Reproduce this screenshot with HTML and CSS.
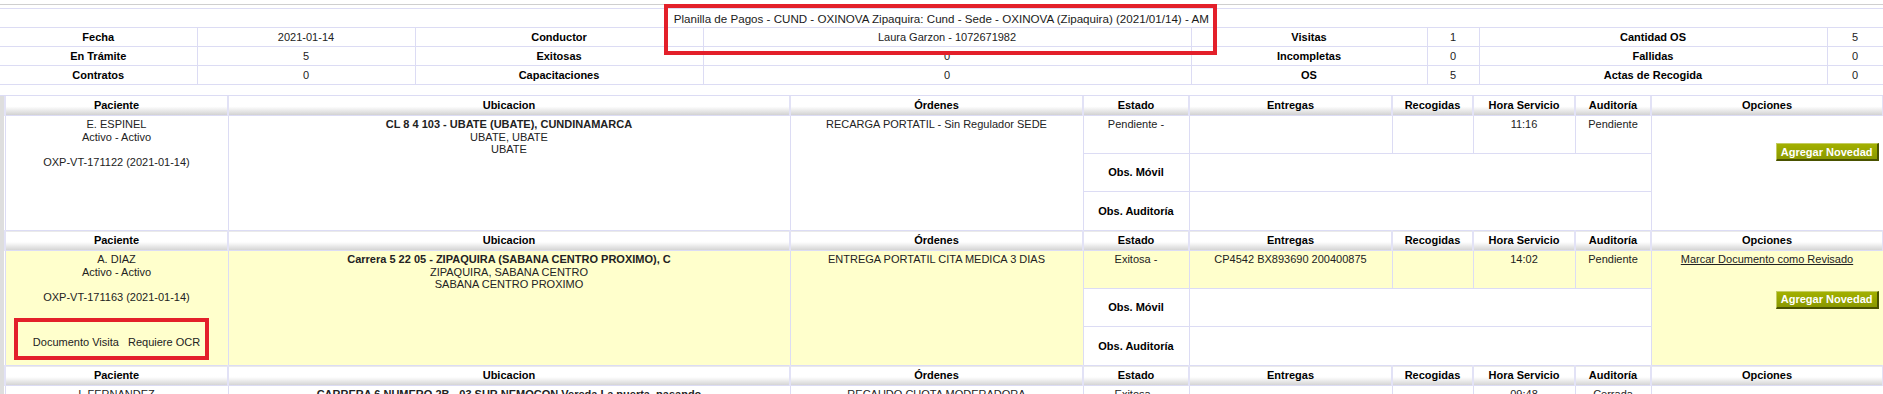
FILE: index.html
```html
<!DOCTYPE html>
<html>
<head>
    <title>Planilla de Pagos</title>
    <link rel="stylesheet" href="styles.css">
</head>
<body>
    <div class="topbar"></div>

    <table class="resumen">
        <colgroup>
            <col style="width: 197px">
            <col style="width: 218px">
            <col style="width: 288px">
            <col style="width: 488px">
            <col style="width: 236px">
            <col style="width: 52px">
            <col style="width: 348px">
            <col style="width: 56px">
        </colgroup>
        <tr>
            <td colspan="8" class="titulo">Planilla de Pagos - CUND - OXINOVA Zipaquira: Cund - Sede - OXINOVA (Zipaquira) (2021/01/14) - AM</td>
        </tr>
        <tr>
            <th>Fecha</th>
            <td>2021-01-14</td>
            <th>Conductor</th>
            <td>Laura Garzon - 1072671982</td>
            <th>Visitas</th>
            <td>1</td>
            <th>Cantidad OS</th>
            <td>5</td>
        </tr>
        <tr>
            <th>En Trámite</th>
            <td>5</td>
            <th>Exitosas</th>
            <td>0</td>
            <th>Incompletas</th>
            <td>0</td>
            <th>Fallidas</th>
            <td>0</td>
        </tr>
        <tr>
            <th>Contratos</th>
            <td>0</td>
            <th>Capacitaciones</th>
            <td>0</td>
            <th>OS</th>
            <td>5</td>
            <th>Actas de Recogida</th>
            <td>0</td>
        </tr>
    </table>

    <div class="main">
        <table class="planilla">
            <colgroup>
                <col style="width: 223px">
                <col style="width: 562px">
                <col style="width: 293px">
                <col style="width: 106px">
                <col style="width: 203px">
                <col style="width: 81px">
                <col style="width: 102px">
                <col style="width: 76px">
                <col style="width: 232px">
            </colgroup>

            <tbody class="visita">
                <tr class="cabecera">
                    <th>Paciente</th>
                    <th>Ubicacion</th>
                    <th>Órdenes</th>
                    <th>Estado</th>
                    <th>Entregas</th>
                    <th>Recogidas</th>
                    <th>Hora Servicio</th>
                    <th>Auditoría</th>
                    <th>Opciones</th>
                </tr>
                <tr class="sub">
                    <td rowspan="3">
                        E. ESPINEL<br>
                        Activo - Activo<br>
                        <br>
                        OXP-VT-171122 (2021-01-14)
                    </td>
                    <td rowspan="3">
                        <b>CL 8 4 103 - UBATE (UBATE), CUNDINAMARCA</b><br>
                        UBATE, UBATE<br>
                        UBATE
                    </td>
                    <td rowspan="3">RECARGA PORTATIL - Sin Regulador SEDE</td>
                    <td>Pendiente -</td>
                    <td></td>
                    <td></td>
                    <td>11:16</td>
                    <td>Pendiente</td>
                    <td rowspan="3" class="opciones">
                        <div class="acciones">
                            <input type="button" class="btn-novedad" value="Agregar Novedad">
                        </div>
                    </td>
                </tr>
                <tr class="sub obs">
                    <th>Obs. Móvil</th>
                    <td colspan="4"></td>
                </tr>
                <tr class="sub obs">
                    <th>Obs. Auditoría</th>
                    <td colspan="4"></td>
                </tr>
            </tbody>

            <tbody class="visita exitosa">
                <tr class="cabecera">
                    <th>Paciente</th>
                    <th>Ubicacion</th>
                    <th>Órdenes</th>
                    <th>Estado</th>
                    <th>Entregas</th>
                    <th>Recogidas</th>
                    <th>Hora Servicio</th>
                    <th>Auditoría</th>
                    <th>Opciones</th>
                </tr>
                <tr class="sub">
                    <td rowspan="3">
                        A. DIAZ<br>
                        Activo - Activo<br>
                        <br>
                        OXP-VT-171163 (2021-01-14)
                        <div class="documentos">
                            <a href="#">Documento Visita</a>&nbsp;&nbsp;&nbsp;<a href="#">Requiere OCR</a>
                        </div>
                    </td>
                    <td rowspan="3">
                        <b>Carrera 5 22 05 - ZIPAQUIRA (SABANA CENTRO PROXIMO), C</b><br>
                        ZIPAQUIRA, SABANA CENTRO<br>
                        SABANA CENTRO PROXIMO
                    </td>
                    <td rowspan="3">ENTREGA PORTATIL CITA MEDICA 3 DIAS</td>
                    <td>Exitosa -</td>
                    <td>CP4542 BX893690 200400875</td>
                    <td></td>
                    <td>14:02</td>
                    <td>Pendiente</td>
                    <td rowspan="3" class="opciones">
                        <a href="#" class="revisado">Marcar Documento como Revisado</a>
                        <div class="acciones">
                            <input type="button" class="btn-novedad" value="Agregar Novedad">
                        </div>
                    </td>
                </tr>
                <tr class="sub obs">
                    <th>Obs. Móvil</th>
                    <td colspan="4"></td>
                </tr>
                <tr class="sub obs">
                    <th>Obs. Auditoría</th>
                    <td colspan="4"></td>
                </tr>
            </tbody>

            <tbody class="visita">
                <tr class="cabecera">
                    <th>Paciente</th>
                    <th>Ubicacion</th>
                    <th>Órdenes</th>
                    <th>Estado</th>
                    <th>Entregas</th>
                    <th>Recogidas</th>
                    <th>Hora Servicio</th>
                    <th>Auditoría</th>
                    <th>Opciones</th>
                </tr>
                <tr class="sub">
                    <td rowspan="3">
                        I. FERNANDEZ<br>
                        Activo - Activo<br>
                        <br>
                        OXP-VT-171140 (2021-01-14)
                    </td>
                    <td rowspan="3">
                        <b>CARRERA 6 NUMERO 2B - 03 SUR NEMOCON Vereda La puerta, pasando</b><br>
                        NEMOCON, SABANA CENTRO
                    </td>
                    <td rowspan="3">RECAUDO CUOTA MODERADORA</td>
                    <td>Exitosa -</td>
                    <td></td>
                    <td></td>
                    <td>09:48</td>
                    <td>Cerrada</td>
                    <td rowspan="3" class="opciones"></td>
                </tr>
                <tr class="sub obs">
                    <th>Obs. Móvil</th>
                    <td colspan="4"></td>
                </tr>
                <tr class="sub obs">
                    <th>Obs. Auditoría</th>
                    <td colspan="4"></td>
                </tr>
            </tbody>
        </table>
    </div>

    <!-- marcas de revision -->
    <div class="marca marca-titulo"></div>
    <div class="marca marca-documentos"></div>
</body>
</html>
```

FILE: styles.css
```css
body {
    font-family: "Liberation Sans", Arial, sans-serif;
    font-size: 11px;
    color: #222;
    margin: 0;
    padding: 0;
    background-color: White;
    overflow: hidden;
}

.topbar {
    height: 4px;
    border-bottom: 1px solid #cfcfcf;
    margin-bottom: 3px;
}

table {
    border-collapse: collapse;
    table-layout: fixed;
}

.resumen {
    width: 1883px;
}

.resumen td, .resumen th {
    height: 18px;
    padding: 0;
    text-align: center;
    border: 1px solid #dcdcf4;
    border-left: none;
}

.resumen td {
    font-weight: normal;
}

.resumen th {
    color: #000;
}

.resumen .titulo {
    font-size: 11.6px;
    color: #1a1a1a;
}

.main {
    margin-top: 10px;
    border-top: 1px solid #dcdcf4;
    background-color: #dedede;
    padding-left: 4px;
}

.planilla {
    width: 1879px;
    background-color: White;
    border-left: 1px solid #dcdcf4;
}

.planilla td, .planilla th {
    border: 1px solid #dcdcf4;
    padding: 2px 3px;
    text-align: center;
    vertical-align: top;
    line-height: 12.6px;
}

.cabecera th {
    height: 15px;
    color: #000;
    vertical-align: middle;
    border-top: none;
    border-left: 2px solid #e2e2f6;
    border-right: 2px solid #e2e2f6;
    background: linear-gradient(to bottom, #fff 0%, #fff 55%, #e6e6e6 80%, #d2d2d2 100%);
}

.sub {
    height: 38px;
}

.obs:last-child {
    height: 39px;
}

.obs th {
    color: #000;
    vertical-align: middle;
    background-color: White;
}

.obs td {
    background-color: White;
}

.exitosa .sub td {
    background-color: #ffffcc;
}

.exitosa .obs td {
    background-color: White;
}

a {
    color: #222;
    text-decoration: none;
}

.revisado {
    text-decoration: underline;
}

.documentos {
    margin-top: 33px;
}

.opciones {
    padding-right: 3px;
}

.acciones {
    text-align: right;
    margin-top: 25px;
}

.btn-novedad {
    font-family: "Liberation Sans", Arial, sans-serif;
    font-size: 11px;
    font-weight: bold;
    color: White;
    height: 18px;
    padding: 0 4px;
    margin: 0 1px 0 0;
    background: linear-gradient(to bottom, #a2b000, #8a9800);
    border: 1px solid #4a5200;
    border-top-color: #c4cc60;
    border-left-color: #c4cc60;
    border-right-width: 2px;
    border-bottom-width: 2px;
    cursor: pointer;
}

.marca {
    position: absolute;
    border: 4px solid #e3202a;
}

.marca-titulo {
    left: 664px;
    top: 4px;
    width: 545px;
    height: 43px;
}

.marca-documentos {
    left: 14px;
    top: 318px;
    width: 187px;
    height: 34px;
}
```
